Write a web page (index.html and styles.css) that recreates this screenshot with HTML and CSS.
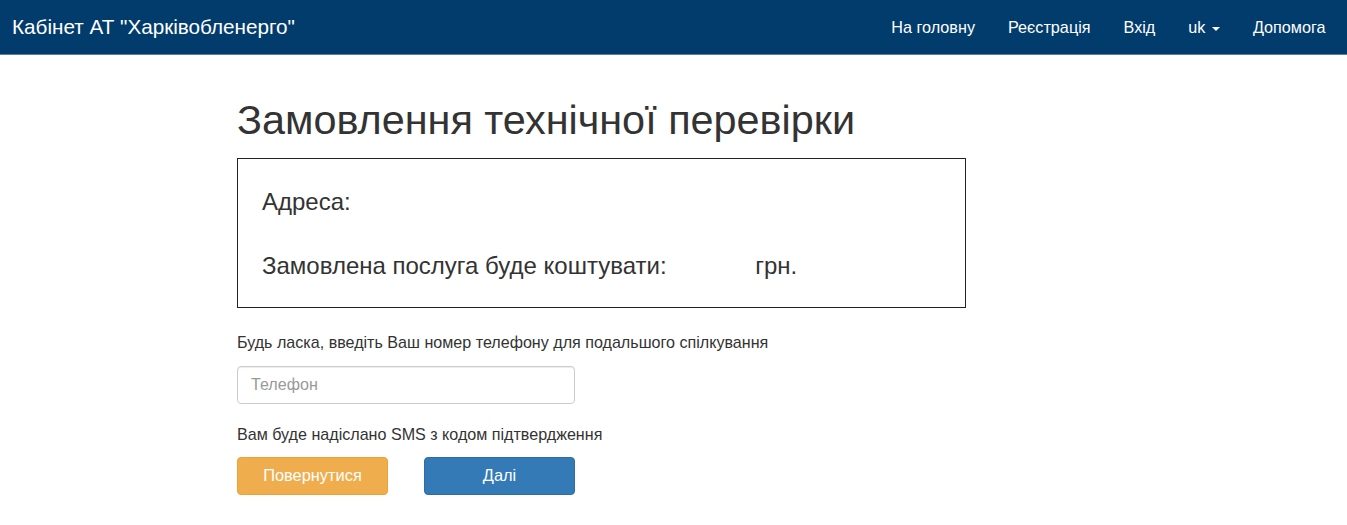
FILE: index.html
```html
<!DOCTYPE html>
<html lang="uk">
<head>
    <meta charset="UTF-8">
    <meta name="viewport" content="width=device-width, initial-scale=1.0">
    <title>Кабінет АТ "Харківобленерго"</title>
    <link rel="stylesheet" href="styles.css">
</head>
<body>
    <nav class="navbar">
        <a class="brand" href="#">Кабінет АТ "Харківобленерго"</a>
        <ul class="nav-links">
            <li><a href="#">На головну</a></li>
            <li><a href="#">Реєстрація</a></li>
            <li><a href="#">Вхід</a></li>
            <li><a href="#">uk <span class="caret"></span></a></li>
            <li><a href="#">Допомога</a></li>
        </ul>
    </nav>

    <main class="content">
        <h1>Замовлення технічної перевірки</h1>

        <div class="order-box">
            <p class="order-line">Адреса:</p>
            <p class="order-line">Замовлена послуга буде коштувати: <span class="price"></span>грн.</p>
        </div>

        <p class="hint">Будь ласка, введіть Ваш номер телефону для подальшого спілкування</p>
        <input class="phone" type="text" placeholder="Телефон">
        <p class="hint sms">Вам буде надіслано SMS з кодом підтвердження</p>

        <div class="buttons">
            <button class="btn btn-warning">Повернутися</button>
            <button class="btn btn-primary">Далі</button>
        </div>
    </main>
</body>
</html>
```

FILE: styles.css
```css
body {
    margin: 0;
    font-family: "Liberation Sans", Arial, sans-serif;
    font-size: 16.1px;
    color: #333;
    background: #fff;
}

.navbar {
    display: flex;
    justify-content: space-between;
    align-items: center;
    height: 54px;
    background-color: #023c6d;
    border-bottom: 1px solid #5d7d9c;
}

.brand {
    padding-left: 12px;
    font-size: 20.7px;
    color: #fff;
    text-decoration: none;
}

.nav-links {
    display: flex;
    list-style: none;
    margin: 0;
    padding: 0 5px 0 0;
}

.nav-links a {
    display: block;
    padding: 0 16.5px;
    font-size: 16.2px;
    line-height: 54px;
    color: #fff;
    text-decoration: none;
}

.caret {
    display: inline-block;
    width: 0;
    height: 0;
    margin-left: 2px;
    vertical-align: middle;
    border-top: 4px solid #fff;
    border-left: 4px solid transparent;
    border-right: 4px solid transparent;
}

.content {
    width: 729px;
    margin-left: 237px;
}

h1 {
    margin: 43px 0 14px;
    font-size: 41.4px;
    font-weight: 500;
    line-height: 1.1;
    color: #333;
}

.order-box {
    display: flex;
    flex-direction: column;
    gap: 34px;
    height: 150px;
    box-sizing: border-box;
    padding: 28px 24px;
    border: 1.5px solid #222;
}

.order-line {
    margin: 0;
    font-size: 24px;
    line-height: 30px;
}

.price {
    display: inline-block;
    width: 82px;
}

.hint {
    margin: 23px 0 0;
    line-height: 22px;
}

.phone {
    display: block;
    width: 338px;
    height: 38px;
    box-sizing: border-box;
    margin-top: 13px;
    padding: 6px 13px;
    font-family: inherit;
    font-size: 16.1px;
    color: #555;
    border: 1px solid #ccc;
    border-radius: 4px;
    box-shadow: inset 0 1px 1px rgba(0, 0, 0, 0.075);
}

.phone::placeholder {
    color: #999;
}

.sms {
    margin-top: 19px;
}

.buttons {
    display: flex;
    gap: 36px;
    margin-top: 12px;
}

.btn {
    width: 151px;
    height: 38px;
    font-family: inherit;
    font-size: 16.4px;
    color: #fff;
    border: 1px solid transparent;
    border-radius: 4px;
    cursor: pointer;
}

.btn-warning {
    background-color: #f0ad4e;
    border-color: #eea236;
}

.btn-primary {
    background-color: #337ab7;
    border-color: #2e6da4;
}
```
